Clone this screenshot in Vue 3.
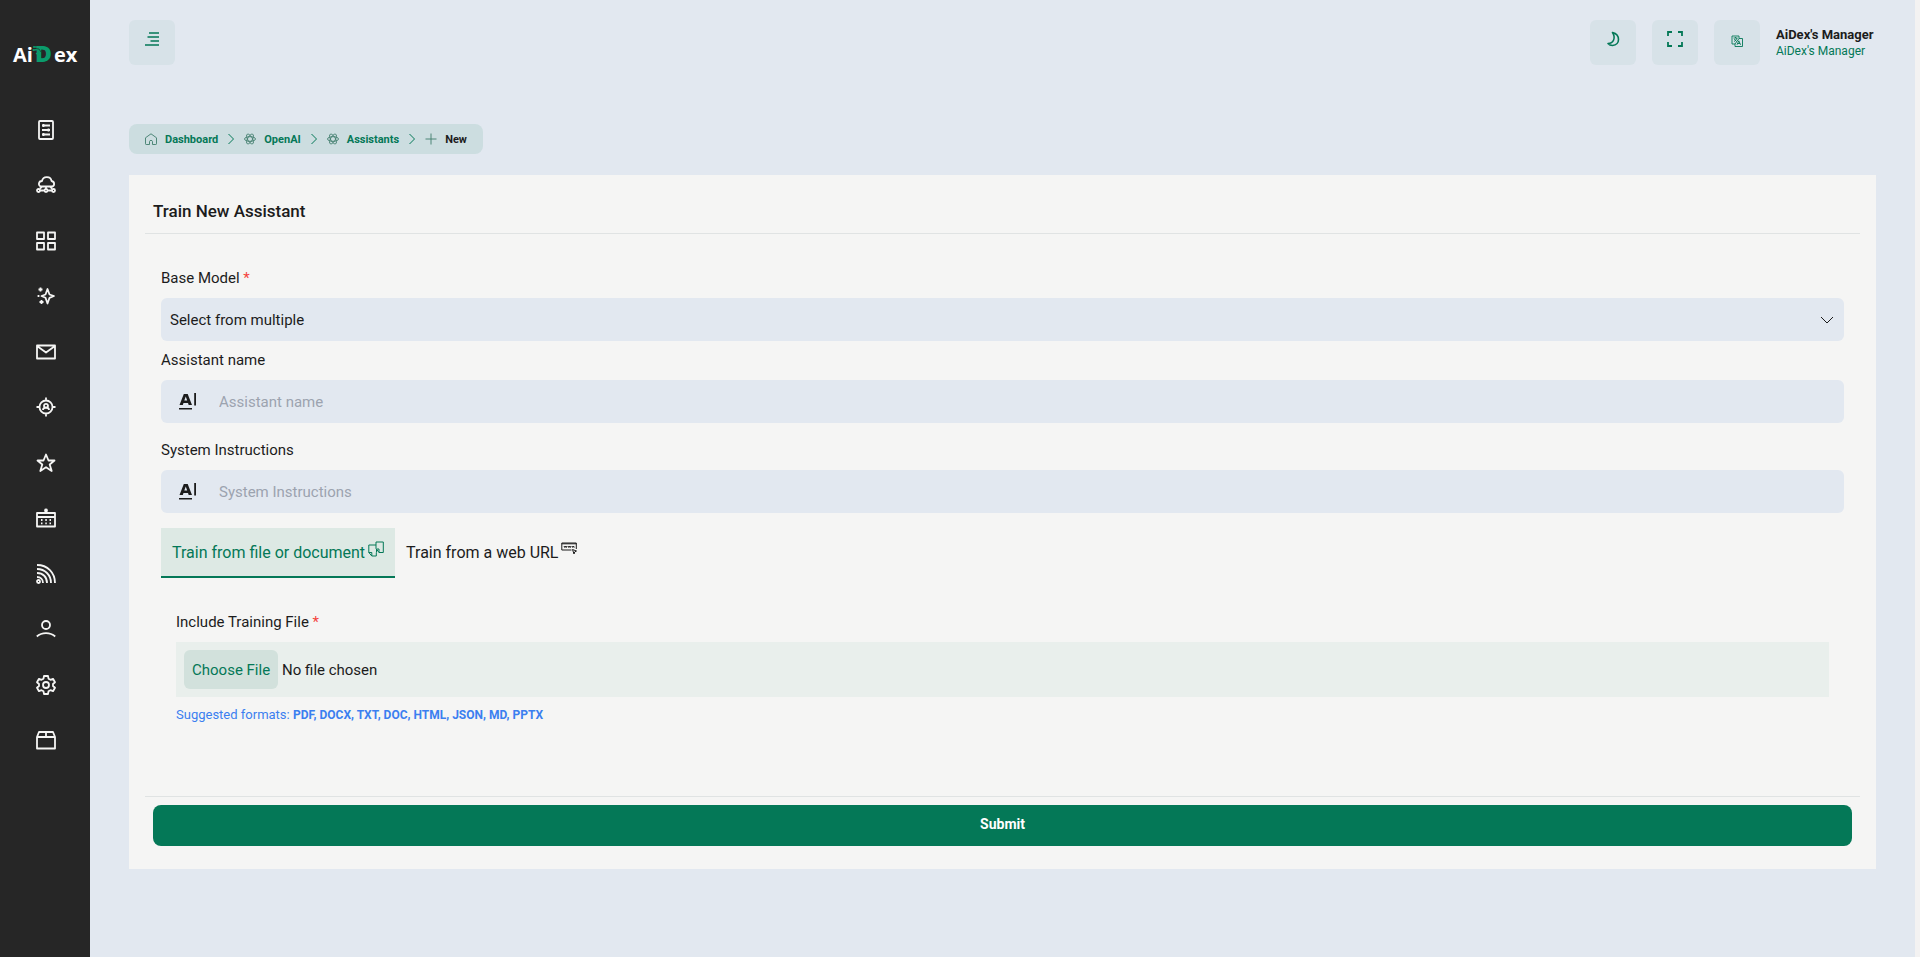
<template>
  <div class="layout">
    <aside class="sidebar">
      <a href="#" class="logo" aria-label="AiDex">
        <svg width="72" height="40" viewBox="0 0 72 40">
          <text class="logo-text" x="4" y="26">Ai</text>
          <text class="logo-text logo-mark" x="26" y="26">D</text>
          <text class="logo-text" x="45" y="26">ex</text>
          <path d="M28 11h-2.500M29 13.500l-4 .5M30 16l-3 2" stroke="#0b9b6c" stroke-width="1.400" />
          <circle cx="25" cy="11" r="1" fill="#0b9b6c" stroke="none" />
          <circle cx="24.500" cy="14" r="1" fill="#0b9b6c" stroke="none" />
          <path d="M27 12.500l3 .5 2 3" stroke="#17513d" stroke-width="1" />
        </svg>
      </a>
      <nav>
        <ul class="menu">
          <li v-for="item in menu" :key="item.title">
            <a href="#" :title="item.title" :aria-label="item.title">
              <svg class="menu-icon" viewBox="0 0 20 20">
                <path :d="item.path" />
              </svg>
            </a>
          </li>
        </ul>
      </nav>
    </aside>

    <main class="content">
      <header class="topbar">
        <button type="button" class="icon-button" title="Menu">
          <svg class="icon-sm" viewBox="0 0 16 16">
            <path d="M5 2h10M3.500 6H15M6.500 10H15M1 14h14" stroke-width="1.600" />
          </svg>
        </button>
        <div class="topbar-right">
          <button type="button" class="icon-button" title="Dark mode">
            <svg class="icon-sm" viewBox="0 0 16 16">
              <path d="M7.500 1.500c8 2 8 12.500 0 13-2 0-3.500-.8-4.500-2 5.500 0 8-5.500 4.500-11z" stroke-width="1.600" stroke-linejoin="round" />
            </svg>
          </button>
          <button type="button" class="icon-button" title="Fullscreen">
            <svg class="icon-sm" viewBox="0 0 16 16">
              <path d="M1 5V1h4M11 1h4v4M15 11v4h-4M5 15H1v-4" stroke-width="1.800" />
            </svg>
          </button>
          <button type="button" class="icon-button icon-button-lang" title="Language">
            <svg class="icon-xs" viewBox="0 0 12 12">
              <path d="M1 1h7v2.500M8 3.500h3.500v8H4V9M4 9H1V1M2.500 3h4M4.500 2v1M3 6.500c1.500-.8 2.500-2 3-3.500M3.200 4.200l2.500 2.300M6 9.800l1.800-4 1.800 4M6.600 8.500H9M8 3.500 4 9" stroke-width="0.900" />
            </svg>
          </button>
          <div class="user">
            <span class="user-name">AiDex's Manager</span>
            <span class="user-role">AiDex's Manager</span>
          </div>
        </div>
      </header>

      <nav class="breadcrumb" aria-label="Breadcrumb">
        <template v-for="(crumb, index) in breadcrumb" :key="crumb.label">
          <svg v-if="index > 0" class="crumb-separator" viewBox="0 0 8 12">
            <path d="M1.500 1l5 5-5 5" />
          </svg>
          <a v-if="index < breadcrumb.length - 1" href="#" class="crumb">
            <svg class="crumb-icon" viewBox="0 0 12 12"><path :d="crumb.icon" /></svg>
            {{ crumb.label }}
          </a>
          <span v-else class="crumb crumb-current" aria-current="page">
            <svg class="crumb-icon" viewBox="0 0 12 12"><path :d="crumb.icon" /></svg>
            {{ crumb.label }}
          </span>
        </template>
      </nav>

      <form class="card" @submit.prevent>
        <h1 class="card-title">Train New Assistant</h1>

        <div class="card-body">
          <label for="base-model" class="label">Base Model <span class="required">*</span></label>
          <div class="select-wrapper">
            <select id="base-model" v-model="model" class="field">
              <option value="">Select from multiple</option>
            </select>
            <svg class="select-arrow" viewBox="0 0 14 8"><path d="M1 1l6 6 6-6" /></svg>
          </div>

          <div v-for="field in fields" :key="field.id" class="form-group">
            <label :for="field.id" class="label">{{ field.label }}</label>
            <div class="field input-group">
              <svg class="input-icon" viewBox="0 0 18 18">
                <path d="M.5 12 4.800 1h3.900L13 12H9.700L9 10H4.500l-.7 2zM5.300 7.600h2.900L6.750 3.600zM0 15h13v1.600H0zM15.200 0H17v12.500h-1.800z" fill-rule="evenodd" />
              </svg>
              <input :id="field.id" type="text" :placeholder="field.label" />
            </div>
          </div>

          <div class="tabs" role="tablist">
            <button type="button" role="tab" class="tab" :class="{ active: tab === 'file' }" @click="tab = 'file'">
              Train from file or document
              <svg class="tab-icon" viewBox="0 0 16 16">
                <path d="M8 5V1h7.300v10.500H11M8 4H.8v7.500l3 3.500h4.500v-3.500M.8 11.500h3V15M8 5v2.500l3 4M11 11.500V8H8.500v3.500" />
              </svg>
            </button>
            <button type="button" role="tab" class="tab" :class="{ active: tab === 'url' }" @click="tab = 'url'">
              Train from a web URL
              <svg class="tab-icon" viewBox="0 0 16 16">
                <path d="M10.500 9H.8V2h14.500v6M.8 2.800h14.500M3 5l.8 1.500L4.500 5l.8 1.500L6 5M7 5l.8 1.500L8.500 5l.8 1.500L10 5M11 5l.8 1.500.7-1.500.8 1.500M11.500 8.500l4 1.500-1.700.8L13 13z" />
              </svg>
            </button>
          </div>

          <div class="tab-panel">
            <label for="training-file" class="label">Include Training File <span class="required">*</span></label>
            <input id="training-file" type="file" class="file-input" />
            <p class="hint">Suggested formats: <strong>PDF, DOCX, TXT, DOC, HTML, JSON, MD, PPTX</strong></p>
          </div>
        </div>

        <div class="card-footer">
          <button type="submit" class="submit-button">Submit</button>
        </div>
      </form>
    </main>
  </div>
</template>

<script setup>
import { ref } from 'vue';

const model = ref('');
const tab = ref('file');

const openai = 'M.5 6a5.500 2.300 0 1 0 11 0 5.500 2.300 0 1 0-11 0M3.250 1.240a5.500 2.300 60 1 0 5.500 9.520 5.500 2.300 60 1 0-5.500-9.520M8.750 1.240a5.500 2.300 120 1 0-5.500 9.520 5.500 2.300 120 1 0 5.500-9.520';

const breadcrumb = [
  { label: 'Dashboard', icon: 'M4.500 11.500H1.200q-.7 0-.7-.7V4.800L6 .8l5.500 4v6q0 .7-.7.7H7.500V8.500C7.500 7 4.500 7 4.500 8.500z' },
  { label: 'OpenAI', icon: openai },
  { label: 'Assistants', icon: openai },
  { label: 'New', icon: 'M6 .5v11M.5 6h11' }
];

const fields = [
  { id: 'assistant-name', label: 'Assistant name' },
  { id: 'system-instructions', label: 'System Instructions' }
];

const menu = [
  { title: 'Documents', path: 'M4 1h12q1 0 1 1v16q0 1-1 1H4q-1 0-1-1V2q0-1 1-1zM6 5.500h8M6 10h8M6 14.500h8M7.500 4v3M12.500 8.500v3M7.500 13v3' },
  { title: 'Cloud', path: 'M5.500 11.500C1.500 11 2.500 6 6 6c1-5.500 9-5 9.500 0 3.500.5 3.500 5.500 0 5.500zM10 11.500v3M4 13.500l2-2M16 13.500l-2-2M1 15.500a1.500 1.500 0 1 0 3 0 1.500 1.500 0 1 0-3 0M8.500 15.500a1.500 1.500 0 1 0 3 0 1.500 1.500 0 1 0-3 0M16 15.500a1.500 1.500 0 1 0 3 0 1.500 1.500 0 1 0-3 0M4 15.500h4.500M11.500 15.500H16' },
  { title: 'Apps', path: 'M1 1.500h7v6.500H1zM12 1.500h7v6.500h-7zM1 12h7v6.500H1zM12 12h7v6.500h-7z' },
  { title: 'AI tools', path: 'M11.500 3l2 5.500L18 10l-4.500 1.800-2 5.700-2-5.700L5.500 10l4-1.500zM4.500 1.500v4M2.500 3.500h4M5.500 14v4M3.500 16h4M2.500 9v2' },
  { title: 'Mail', path: 'M1 3.500h18v13H1zM1 4l9 6.500L19 4' },
  { title: 'Audience', path: 'M3.500 10a6.500 6.500 0 1 0 13 0 6.500 6.500 0 1 0-13 0M10 .5v3M10 16.500v3M.5 10h3M16.500 10h3M8 8.800a2 2 0 1 0 4 0 2 2 0 1 0-4 0M7 13c0-3 6-3 6 0' },
  { title: 'Favorites', path: 'M10 1.500l2.500 6H18.500l-4.800 4 2 6.500-5.700-3.800L4.300 18l2-6.500-4.800-4h6z' },
  { title: 'Calendar', path: 'M1 5h18v13.500H1zM1 9h18M10 5V3M9 2.500a1 1 0 1 0 2 0 1 1 0 1 0-2 0M5 12h1.500M9.300 12h1.500M13.500 12H15M5 15.300h1.500M9.300 15.300h1.500M13.500 15.300H15' },
  { title: 'Feed', path: 'M1 17.500a1.500 1.500 0 1 0 3 0 1.500 1.500 0 1 0-3 0M1 13c3.500 0 6 2.500 6 6M1 9c6 0 10 4 10 10M1 5c8 0 14 6 14 14M1 1c10.500 0 18 7.500 18 18' },
  { title: 'Profile', path: 'M6 6a4 4 0 1 0 8 0 4 4 0 1 0-8 0M.8 17.500c5-4.500 13.400-4.500 18.400 0' },
  { title: 'Settings', path: 'M7 10a3 3 0 1 0 6 0 3 3 0 1 0-6 0M8 1h4l.5 2.700 2 1.100 2.500-1 2 3.500-2 1.700v2l2 1.700-2 3.500-2.500-1-2 1.100L12 19H8l-.5-2.700-2-1.100-2.500 1-2-3.500L3 11V9L1 7.300l2-3.500 2.500 1 2-1.100z' },
  { title: 'Packages', path: 'M1 7l2-5h14l2 5v11.500H1zM1 7h18M10 2v5' }
];
</script>

<style>
body {
  margin: 0;
  background-color: #e2e8f0;
}
</style>

<style scoped>
* {
  box-sizing: border-box;
}

.layout {
  display: flex;
  min-height: 100vh;
  font-family: Roboto, "Liberation Sans", sans-serif;
  font-size: 15px;
  color: #1c1c1c;
  border-right: 5px solid #f3f2f2;
}

button,
input,
select {
  font: inherit;
  color: inherit;
}

svg {
  fill: none;
  stroke: currentColor;
}

.sidebar {
  width: 90px;
  flex-shrink: 0;
  background-color: #262626;
}

.logo {
  display: flex;
  justify-content: center;
  padding: 36px 0 26px;
}

.logo-text {
  font-family: "Open Sans", sans-serif;
  font-size: 20px;
  font-weight: 700;
  fill: #fff;
  stroke: none;
}

.logo-mark {
  font-size: 23px;
  font-weight: 800;
  fill: #0b9b6c;
}

.menu {
  display: flex;
  flex-direction: column;
  justify-content: space-around;
  height: 666px;
  margin: 0;
  padding: 0;
  list-style: none;
}

.menu a {
  display: flex;
  justify-content: center;
  margin-left: 2px;
  color: #f5f5f4;
}

.menu-icon {
  width: 20px;
  height: 20px;
  stroke-width: 1.8;
  stroke-linejoin: round;
}

.content {
  flex: 1;
  min-width: 0;
  padding: 20px 39px 32px;
}

.topbar,
.topbar-right {
  display: flex;
  justify-content: space-between;
}

.topbar-right {
  gap: 16px;
}

.icon-button {
  display: flex;
  justify-content: center;
  width: 46px;
  height: 45px;
  padding: 11px 0;
  border: none;
  border-radius: 6px;
  background-color: #d7e2e8;
  color: #047857;
  cursor: pointer;
}

.icon-button-lang {
  align-items: center;
  padding: 0 0 4px;
}

.icon-sm {
  width: 16px;
  height: 16px;
}

.icon-xs {
  width: 12px;
  height: 12px;
}

.user {
  display: flex;
  flex-direction: column;
  min-width: 100px;
  padding-top: 6px;
}

.user-name {
  font-size: 13px;
  font-weight: 700;
  line-height: 18px;
}

.user-role {
  font-size: 12px;
  line-height: 15px;
  color: #047857;
}

.breadcrumb {
  display: flex;
  align-items: center;
  gap: 9px;
  width: fit-content;
  height: 30px;
  margin: 59px 0 21px;
  padding: 0 16px;
  border-radius: 8px;
  background-color: #ccdde0;
  font-size: 11px;
  font-weight: 700;
  color: #047857;
}

.crumb {
  display: flex;
  align-items: center;
  gap: 8px;
  color: inherit;
  text-decoration: none;
}

.crumb-current {
  color: #1c1c1c;
}

.crumb-icon {
  width: 12px;
  height: 12px;
  color: #3f7d6c;
  stroke-width: 0.9;
}

.crumb-separator {
  width: 8px;
  height: 12px;
}

.card {
  padding: 16px 16px 23px;
  background-color: #f5f5f4;
}

.card-title {
  margin: 0;
  padding: 8px 8px 10px;
  border-bottom: 1px solid #e0e3e3;
  font-size: 17px;
  font-weight: 500;
  line-height: 24px;
}

.card-body {
  padding: 32px 16px 71px;
}

.label {
  display: block;
  padding-bottom: 8px;
  font-size: 15px;
  line-height: 24px;
}

.required {
  color: #f4433c;
}

.field {
  width: 100%;
  height: 43px;
  border: none;
  border-radius: 6px;
  background-color: #e2e8f0;
}

.select-wrapper {
  position: relative;
  margin-bottom: 7px;
}

select.field {
  display: block;
  padding: 0 9px;
  appearance: none;
}

.select-arrow {
  position: absolute;
  top: 18px;
  right: 10px;
  width: 14px;
  height: 8px;
  pointer-events: none;
}

.form-group {
  margin-bottom: 15px;
}

.input-group {
  display: flex;
  align-items: center;
  gap: 22px;
  padding: 0 18px;
}

.input-icon {
  width: 18px;
  height: 18px;
  fill: #1c1c1c;
  stroke: none;
}

.input-group input {
  flex: 1;
  height: 100%;
  padding: 0;
  border: none;
  outline: none;
  background: none;
}

.input-group input::placeholder {
  color: #9ca3af;
}

.tabs {
  display: flex;
}

.tab {
  display: flex;
  align-items: center;
  gap: 3px;
  height: 50px;
  padding: 0 11px;
  border: none;
  border-bottom: 2px solid transparent;
  background: none;
  font-size: 16px;
  cursor: pointer;
}

.tab.active {
  border-bottom-color: #047857;
  background-color: #dde9e4;
  color: #047857;
}

.tab-icon {
  width: 16px;
  height: 16px;
  margin-bottom: 6px;
}

.tab-panel {
  padding: 32px 15px 0;
}

.file-input {
  display: block;
  width: 100%;
  height: 55px;
  padding: 8px;
  background-color: #e9efec;
}

.file-input::file-selector-button {
  height: 39px;
  margin: 0 4px 0 0;
  padding: 0 8px;
  border: none;
  border-radius: 6px;
  background-color: #d2e1dc;
  color: #047857;
  font: inherit;
}

.hint {
  margin: 8px 0 0;
  font-size: 13px;
  line-height: 20px;
  color: #3b7ff0;
}

.hint strong {
  font-size: 12px;
}

.card-footer {
  padding: 8px 8px 0;
  border-top: 1px solid #e0e3e3;
}

.submit-button {
  width: 100%;
  height: 41px;
  padding: 0 0 4px;
  border: none;
  border-radius: 8px;
  background-color: #047857;
  color: #fff;
  font-size: 14px;
  font-weight: 700;
  cursor: pointer;
}
</style>
